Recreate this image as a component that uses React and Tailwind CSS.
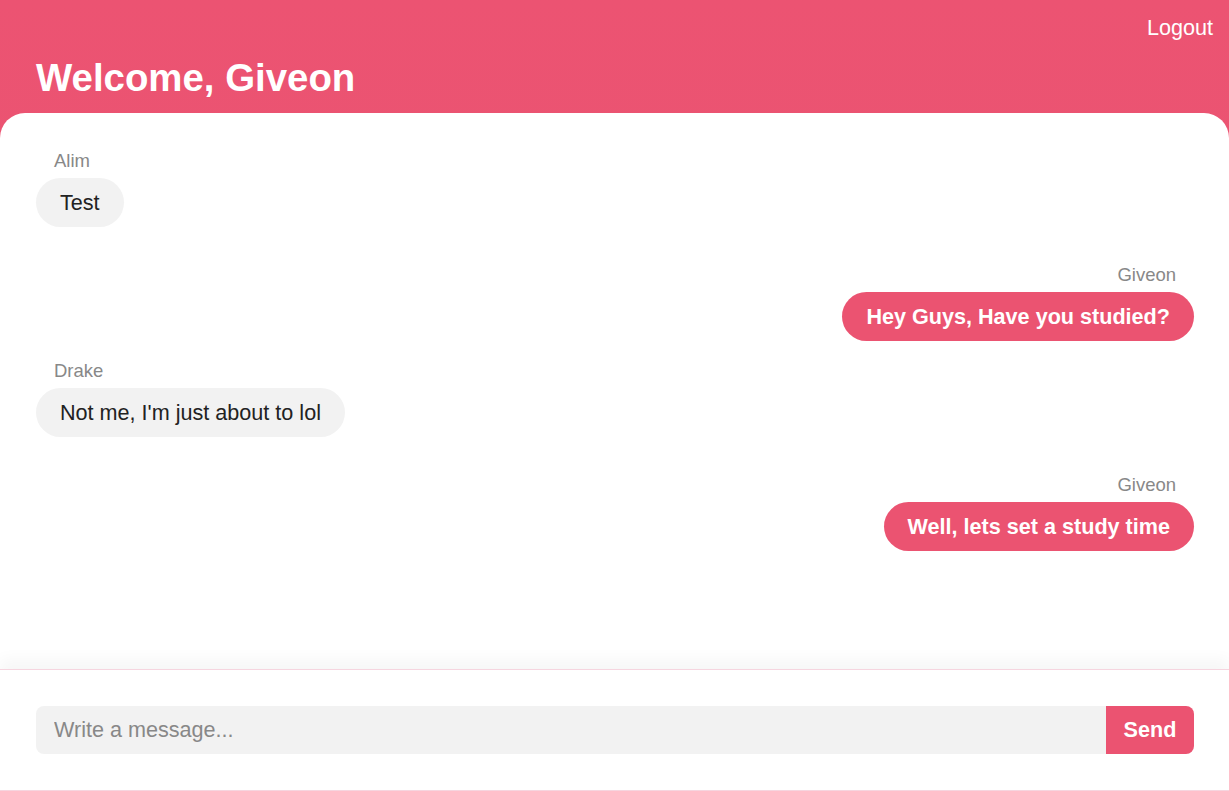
const messages = [
  { id: 1, user: "Alim", text: "Test", mine: false },
  { id: 2, user: "Giveon", text: "Hey Guys, Have you studied?", mine: true },
  { id: 3, user: "Drake", text: "Not me, I'm just about to lol", mine: false },
  { id: 4, user: "Giveon", text: "Well, lets set a study time", mine: true },
];

function Message({ msg, first }) {
  const spacing = first ? "" : msg.mine ? "mt-[37px]" : "mt-[19px]";
  return (
    <div className={`flex flex-col ${msg.mine ? "items-end" : "items-start"} ${spacing}`}>
      <div className={`text-[18.5px] leading-[22px] text-[#888] mb-[6px] ${msg.mine ? "pr-[18px]" : "pl-[18px]"}`}>
        {msg.user}
      </div>
      <div
        className={`rounded-full px-6 py-3 text-[21.6px] leading-[25px] ${
          msg.mine ? "bg-[#eb5371] text-white font-bold" : "bg-[#f2f2f2] text-[#222]"
        }`}
      >
        {msg.text}
      </div>
    </div>
  );
}

export default function App() {
  return (
    <div
      className="h-screen flex flex-col bg-gradient-to-b from-[#ec5372] to-[#e6556f] overflow-hidden"
      style={{ fontFamily: '"Liberation Sans", Arial, sans-serif' }}
    >
      {/* Header */}
      <header className="h-[113px] flex-shrink-0 flex flex-col px-9 relative">
        <button className="absolute right-4 top-[14px] text-[21.6px] leading-[28px] text-white">Logout</button>
        <h1 className="mt-[57px] text-[38.4px] leading-[42px] font-bold text-white">Welcome, Giveon</h1>
      </header>

      {/* Panel */}
      <div className="flex-1 flex flex-col bg-white rounded-t-[25px] min-h-0">
        <div className="flex-1 pl-9 pr-[35px] pt-[37px] overflow-hidden">
          {messages.map((m, i) => (
            <Message key={m.id} msg={m} first={i === 0} />
          ))}
        </div>

        <div className="flex-shrink-0 border-t border-b border-[#f6d5df] pl-9 pr-[35px] py-9 bg-white shadow-[0_-10px_14px_rgba(0,0,0,0.035)]">
          <div className="flex h-12">
            <input
              className="flex-1 bg-[#f2f2f2] rounded-l-lg px-[18px] text-[21.6px] text-[#333] placeholder-[#888] outline-none"
              placeholder="Write a message..."
            />
            <button className="w-[88px] bg-[#eb5371] rounded-r-lg text-white font-bold text-[21.6px]">Send</button>
          </div>
        </div>
      </div>
    </div>
  );
}
